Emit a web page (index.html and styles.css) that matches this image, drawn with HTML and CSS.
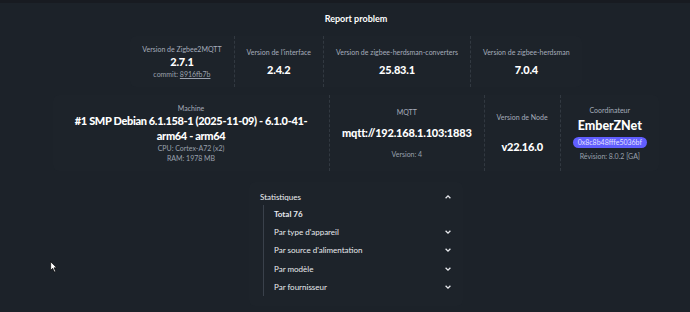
FILE: index.html
```html
<!DOCTYPE html>
<html lang="fr">
<head>
    <meta charset="UTF-8">
    <meta name="viewport" content="width=device-width, initial-scale=1.0">
    <title>Zigbee2MQTT - Paramètres</title>
    <link rel="stylesheet" href="styles.css">
</head>
<body>

<div class="topline"></div>

<div class="page">
    <div class="toolbar">
        <a class="report" href="#">Report problem</a>
    </div>

    <div class="stats">
        <div class="stat">
            <div class="stat-title">Version de Zigbee2MQTT</div>
            <div class="stat-value">2.7.1</div>
            <div class="stat-desc">commit: <a href="#">8916fb7b</a></div>
        </div>
        <div class="stat">
            <div class="stat-title">Version de l'interface</div>
            <div class="stat-value">2.4.2</div>
        </div>
        <div class="stat">
            <div class="stat-title">Version de zigbee-herdsman-converters</div>
            <div class="stat-value">25.83.1</div>
        </div>
        <div class="stat">
            <div class="stat-title">Version de zigbee-herdsman</div>
            <div class="stat-value">7.0.4</div>
        </div>
    </div>

    <div class="stats">
        <div class="stat machine">
            <div class="stat-title">Machine</div>
            <div class="stat-value wrap">#1 SMP Debian 6.1.158-1 (2025-11-09) - 6.1.0-41-arm64 - arm64</div>
            <div class="stat-desc">CPU: Cortex-A72 (x2)</div>
            <div class="stat-desc">RAM: 1978 MB</div>
        </div>
        <div class="stat">
            <div class="stat-title">MQTT</div>
            <div class="stat-value">mqtt://192.168.1.103:1883</div>
            <div class="stat-desc">Version: 4</div>
        </div>
        <div class="stat">
            <div class="stat-title">Version de Node</div>
            <div class="stat-value">v22.16.0</div>
        </div>
        <div class="stat">
            <div class="stat-title">Coordinateur</div>
            <div class="stat-value big">EmberZNet</div>
            <div class="badge">0x8c8b48fffe5036bf</div>
            <div class="stat-desc">Révision: 8.0.2 [GA]</div>
        </div>
    </div>

    <div class="collapse">
        <div class="collapse-head">
            <span>Statistiques</span>
            <svg class="chev" viewBox="0 0 10 10"><path d="M2 6.5 L5 3.5 L8 6.5" /></svg>
        </div>
        <ul class="menu">
            <li class="total">Total 76</li>
            <li>Par type d'appareil <svg class="chev" viewBox="0 0 10 10"><path d="M2 3.5 L5 6.5 L8 3.5" /></svg></li>
            <li>Par source d'alimentation <svg class="chev" viewBox="0 0 10 10"><path d="M2 3.5 L5 6.5 L8 3.5" /></svg></li>
            <li>Par modèle <svg class="chev" viewBox="0 0 10 10"><path d="M2 3.5 L5 6.5 L8 3.5" /></svg></li>
            <li>Par fournisseur <svg class="chev" viewBox="0 0 10 10"><path d="M2 3.5 L5 6.5 L8 3.5" /></svg></li>
        </ul>
    </div>
</div>

<svg class="cursor" viewBox="0 0 12 18"><path d="M1 1 L1 14 L4 11 L6.5 16.5 L8.5 15.6 L6 10.2 L10 10.2 Z" /></svg>

</body>
</html>
```

FILE: styles.css
```css
* {
    margin: 0;
    padding: 0;
    box-sizing: border-box;
}
body {
    background-color: #1c2229;
    color: #a6adbb;
    font-family: Lato, "Noto Sans", sans-serif;
    font-size: 7px;
    height: 312px;
    overflow: hidden;
}
.topline {
    height: 3px;
    background-color: #181b21;
}
.page {
    padding-left: 22px;
    display: flex;
    flex-direction: column;
    align-items: center;
}
.toolbar {
    height: 33px;
    display: flex;
    align-items: center;
    padding-bottom: 3px;
}
.report {
    color: #ffffff;
    font-weight: bold;
    font-size: 9px;
    text-decoration: none;
}
.stats {
    display: flex;
    background-color: #1d232a;
    border-radius: 6px;
    margin-bottom: 8px;
}
.stat {
    display: grid;
    align-items: center;
    justify-items: center;
    text-align: center;
    padding: 8px 12px;
    border-left: 1px dashed #323941;
}
.stat:first-child { border-left: none; }
.stat-title {
    font-size: 7px;
    color: #a6adbb;
    line-height: 10px;
}
.stat-value {
    font-size: 11px;
    font-weight: 900;
    color: #ffffff;
    line-height: 15px;
    letter-spacing: -0.2px;
}
.stat-value.big {
    font-size: 12.5px;
    letter-spacing: 0;
}
.stat-desc {
    font-size: 7px;
    color: #9aa1ad;
    line-height: 10px;
}
.stat-desc a { color: #9aa1ad; }
.machine { width: 276px; }
.machine .stat-value { letter-spacing: -0.35px; }
.wrap { max-width: 262px; }
.badge {
    background-color: #615eff;
    color: #e0e0ff;
    font-size: 7px;
    border-radius: 6px;
    padding: 1px 5px;
    line-height: 9px;
}
.collapse {
    width: 214px;
    margin-top: 3px;
    padding: 7px 11px 10px 11px;
    background-color: #1d232a;
    border-radius: 6px;
    color: #e8eaee;
    font-size: 8px;
}
.collapse-head {
    display: flex;
    justify-content: space-between;
    align-items: center;
    height: 15px;
    color: #eef0f3;
}
.chev {
    width: 8px;
    height: 8px;
    fill: none;
    stroke: #e8eaee;
    stroke-width: 1.6;
}
.menu {
    list-style: none;
    margin-left: 3px;
    margin-top: 1px;
    border-left: 1px solid #3a414b;
    padding-left: 10px;
}
.menu li {
    display: flex;
    justify-content: space-between;
    align-items: center;
    height: 18.2px;
}
.menu .total { font-weight: bold; }
.cursor {
    position: absolute;
    left: 50px;
    top: 261px;
    width: 8px;
    height: 12px;
    fill: #ffffff;
    stroke: #000000;
    stroke-width: 1;
}
```
